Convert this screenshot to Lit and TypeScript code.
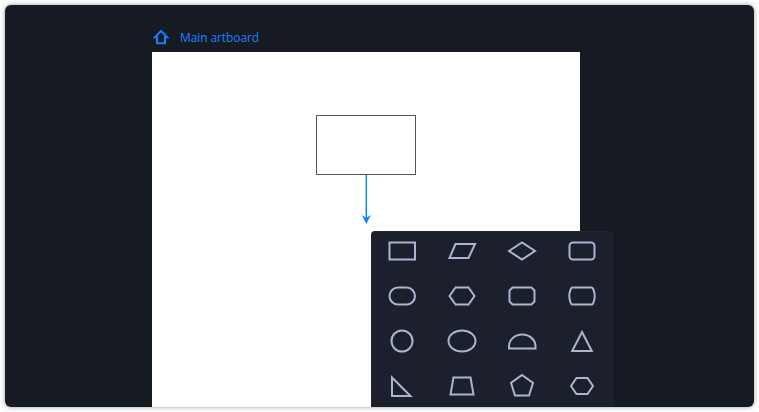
import { LitElement, html, css, svg } from "lit";
import { customElement } from "lit/decorators.js";

const poly = (p: string) => svg`<polygon points=${p}></polygon>`;

const shapes = [
  svg`<rect x="-12.5" y="-8.5" width="25.5" height="17"></rect>`,
  poly("-12.5,7 -6.5,-7 13,-7 6.5,7"),
  poly("-13,0 0,-8.5 13,0 0,8.5"),
  svg`<rect x="-12.5" y="-8.5" width="25" height="17" rx="3.5"></rect>`,
  svg`<rect x="-12.5" y="-8.5" width="25.5" height="17" rx="8.5"></rect>`,
  poly("-12.5,0 -6.5,-8.5 6.5,-8.5 12.5,0 6.5,8.5 -6.5,8.5"),
  svg`<path d="M-9.5-8.5H9.5L12.5-5.5V5.5L9.5 8.5H-9.5L-12.5 5.5V-5.5Z"></path>`,
  svg`<path d="M-9.5-8.5H9.5Q10.5-8.5 11-7.5Q14.5 0 11 7.5Q10.5 8.5 9.5 8.5H-9.5Q-10.5 8.5-11 7.5Q-14.5 0-11-7.5Q-10.5-8.5-9.5-8.5Z"></path>`,
  svg`<circle r="10.5"></circle>`,
  svg`<ellipse rx="13.5" ry="10.5"></ellipse>`,
  svg`<path d="M-13 7.5V5.5C-13-1.5-7-6.5 .2-6.5S13.5-1.5 13.5 5.5V7.5Z"></path>`,
  poly("0,-9 -9.8,10 9.8,10"),
  poly("-10,-8.5 -10,10 8.5,10"),
  poly("-8.5,-8.5 8.5,-8.5 11.5,8.5 -11.5,8.5"),
  poly("0,-11 11,-3 7,9.5 -7,9.5 -11,-3"),
  poly("-11,0 -5.5,-8 5.5,-8 11,0 5.5,8 -5.5,8"),
];

@customElement("app-root")
export class AppRoot extends LitElement {
  static styles = css`
    :host {
      display: block;
      width: 759px;
      height: 412px;
      box-sizing: border-box;
      padding: 5px;
      background: #fff;
      font-family: "Open Sans", "Noto Sans", sans-serif;
    }
    .window {
      height: 402px;
      border-radius: 6px;
      background: #161a23;
      box-shadow: 0 0 5px rgba(0, 0, 0, 0.4);
      overflow: hidden;
      display: flex;
      flex-direction: column;
      padding-left: 147px;
      box-sizing: border-box;
    }
    .crumb {
      height: 47px;
      flex: none;
      display: flex;
      align-items: center;
      gap: 11px;
      padding: 18px 0 0 1px;
      box-sizing: border-box;
      color: #1a82ff;
      font-size: 12px;
      font-weight: 500;
      letter-spacing: -0.1px;
    }
    .home {
      width: 16px;
      height: 16px;
      display: block;
    }
    .home path {
      fill: none;
      stroke: #147fff;
      stroke-width: 2.1;
    }
    .artboard {
      position: relative;
      width: 428px;
      flex: 1;
      background: #fff;
    }
    .node {
      position: absolute;
      left: 164px;
      top: 63px;
      width: 100px;
      height: 60px;
      box-sizing: border-box;
      border: 1px solid #555;
    }
    .arrow {
      position: absolute;
      left: 205px;
      top: 122px;
      width: 20px;
      height: 54px;
    }
    .palette {
      position: absolute;
      left: 219px;
      top: 179px;
      width: 242px;
      height: 176px;
      box-sizing: border-box;
      background: #1c202c;
      border: 1px solid #222633;
      border-bottom: none;
      border-radius: 4px 4px 0 0;
      display: grid;
      grid-template-columns: repeat(4, 60px);
      grid-auto-rows: 38px;
      row-gap: 7px;
      align-content: start;
    }
    .cell {
      display: flex;
      align-items: center;
      justify-content: center;
    }
    .cell svg {
      width: 32px;
      height: 28px;
      display: block;
      overflow: visible;
      fill: none;
      stroke: #a9b5d1;
      stroke-width: 2;
    }
  `;

  render() {
    return html`
      <div class="window">
        <div class="crumb">
          <svg class="home" viewBox="0 0 16 16">
            <path d="M8 .9L1.9 7.3H4V13.2H12V7.3H14.1Z"></path>
          </svg>
          <span>Main artboard</span>
        </div>
        <div class="artboard">
          <div class="node"></div>
          <svg class="arrow" viewBox="0 0 20 54">
            <path d="M9.3 1V44" stroke="#147fff" stroke-width="1.5" fill="none"></path>
            <path d="M4.8 41L9.3 44L13.8 41L9.3 50Z" fill="#147fff"></path>
          </svg>
          <div class="palette">
            ${shapes.map(
              (s) => html`<div class="cell"><svg viewBox="-16 -14 32 28">${s}</svg></div>`
            )}
          </div>
        </div>
      </div>
    `;
  }
}
